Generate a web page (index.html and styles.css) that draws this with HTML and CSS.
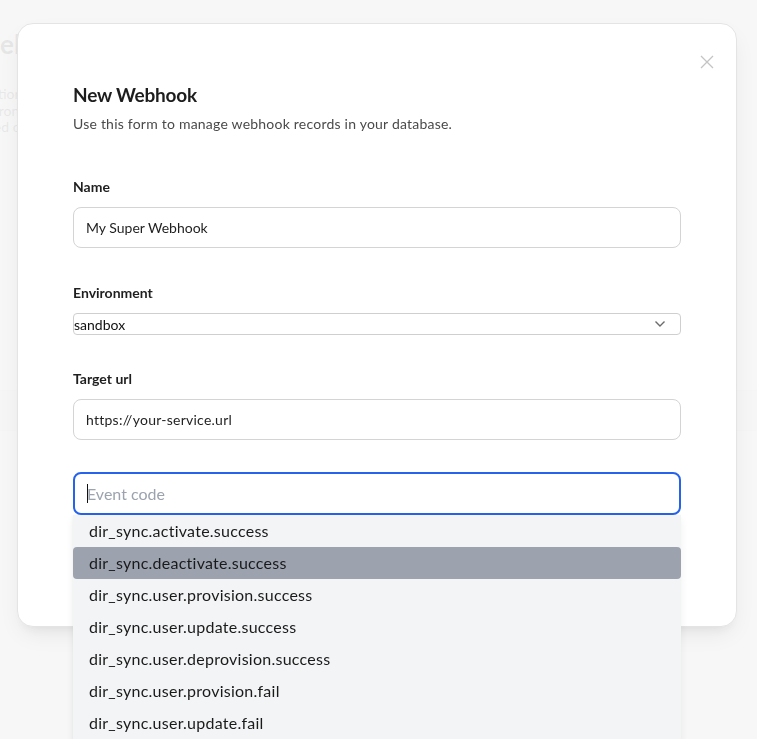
FILE: index.html
```html
<!DOCTYPE html>
<html lang="en">
<head>
<meta charset="utf-8">
<title>New Webhook</title>
<link rel="stylesheet" href="styles.css">
</head>
<body>
<div class="page">
  <h1 class="page-title"><span class="clip">W</span>ebh</h1>
  <p class="page-desc">ification<br>environ<br>based on t</p>
  <div class="table-head"></div>
</div>
<div class="overlay"></div>
<div class="modal">
  <button class="close" aria-label="Close">
    <svg width="14" height="14" viewBox="0 0 14 14"><path d="M1 1L13 13M13 1L1 13" stroke="#c4c4c4" stroke-width="1.3" fill="none"/></svg>
  </button>
  <h2 class="title">New Webhook</h2>
  <p class="subtitle">Use this form to manage webhook records in your database.</p>

  <div class="field first">
    <label class="label">Name</label>
    <div class="input">My Super Webhook</div>
  </div>

  <div class="field env">
    <label class="label">Environment</label>
    <div class="select">
      <span>sandbox</span>
      <svg width="12" height="8" viewBox="0 0 12 8"><path d="M1.5 1.5L6 6L10.5 1.5" stroke="#6b6b6b" stroke-width="1.4" fill="none"/></svg>
    </div>
  </div>

  <div class="field">
    <label class="label">Target url</label>
    <div class="input url">https://your-service.url</div>
  </div>

  <div class="combo">
    <div class="combo-input"><span class="caret"></span><span class="placeholder">Event code</span></div>
    <ul class="options">
      <li>dir_sync.activate.success</li>
      <li class="active">dir_sync.deactivate.success</li>
      <li>dir_sync.user.provision.success</li>
      <li>dir_sync.user.update.success</li>
      <li>dir_sync.user.deprovision.success</li>
      <li>dir_sync.user.provision.fail</li>
      <li>dir_sync.user.update.fail</li>
      <li>dir_sync.user.deprovision.fail</li>
    </ul>
  </div>
</div>
</body>
</html>
```

FILE: styles.css
```css
* { box-sizing: border-box; }
html, body { margin: 0; padding: 0; }
body {
  width: 757px;
  height: 739px;
  overflow: hidden;
  background: #ffffff;
  font-family: "Lato", "Noto Sans", sans-serif;
  color: #1f1f1f;
}
.page {
  padding: 28px 0 0 0;
}
.page-title {
  margin: 0;
  font-size: 26px;
  line-height: 32px;
  font-weight: 700;
  color: #111;
  display: flex;
}
.page-title .clip {
  display: inline-block;
  width: 0;
  overflow: hidden;
}
.page-desc {
  margin: 26px 0 0 -27px;
  font-size: 14px;
  line-height: 16.5px;
  color: #333;
}
.table-head {
  margin-top: 254px;
  height: 41px;
  background: #f2f2f2;
  border-top: 1px solid #d8d8d8;
  border-bottom: 1px solid #d8d8d8;
}
.overlay {
  position: fixed;
  inset: 0;
  background: rgba(246, 246, 246, 0.93);
}
.modal {
  position: fixed;
  left: 17px;
  top: 23px;
  width: 720px;
  height: 604px;
  background: #ffffff;
  border: 1px solid #e4e4e4;
  border-radius: 16px;
  box-shadow: 0 10px 25px -5px rgba(0,0,0,0.08), 0 8px 10px -6px rgba(0,0,0,0.06);
  padding: 57px 55px 0 55px;
}
.close {
  position: absolute;
  right: 22px;
  top: 31px;
  width: 14px;
  height: 14px;
  padding: 0;
  border: 0;
  background: none;
  display: flex;
}
.title {
  margin: 0;
  font-size: 19px;
  line-height: 28px;
  font-weight: 700;
  letter-spacing: -0.2px;
  color: #1d1d1d;
}
.subtitle {
  margin: 5px 0 0 0;
  font-size: 14px;
  line-height: 20px;
  letter-spacing: 0.22px;
  color: #4a4a4a;
}
.field { display: flex; flex-direction: column; margin-top: 34px; }
.field.first { margin-top: 43px; }
.field.env { margin-top: 35px; }
.label {
  font-size: 14px;
  line-height: 20px;
  font-weight: 700;
  color: #1f1f1f;
}
.input {
  margin-top: 10px;
  height: 41px;
  border: 1px solid #d4d4d4;
  border-radius: 8px;
  padding: 0 12px;
  display: flex;
  align-items: center;
  font-size: 14px;
  color: #1f1f1f;
}
.input.url { letter-spacing: 0.25px; }
.select {
  margin-top: 10px;
  height: 22px;
  border: 1px solid #cfcfcf;
  border-radius: 4px;
  display: flex;
  align-items: center;
  justify-content: space-between;
  padding: 0 14px 0 0;
  font-size: 14px;
  color: #111;
}
.combo { position: relative; margin-top: 32px; }
.combo-input {
  height: 43px;
  border: 2px solid #2563eb;
  border-radius: 8px;
  padding: 0 12px;
  display: flex;
  align-items: center;
  font-size: 16px;
}
.caret {
  display: block;
  width: 1px;
  height: 19px;
  background: #111;
}
.placeholder { color: #9ca3af; margin-left: -1px; }
.options {
  position: absolute;
  left: 0;
  right: 0;
  top: 43px;
  margin: 0;
  padding: 0;
  list-style: none;
  background: #f3f4f6;
  box-shadow: 0 4px 8px rgba(0,0,0,0.06), -1px 0 3px rgba(0,0,0,0.03);
  border-radius: 0 0 6px 6px;
}
.options li {
  height: 32px;
  padding: 0 16px 2px;
  display: flex;
  align-items: center;
  font-size: 16px;
  letter-spacing: 0.25px;
  color: #1a1a1a;
  border-radius: 4px;
}
.options li.active { background: #9ca3af; }
```
